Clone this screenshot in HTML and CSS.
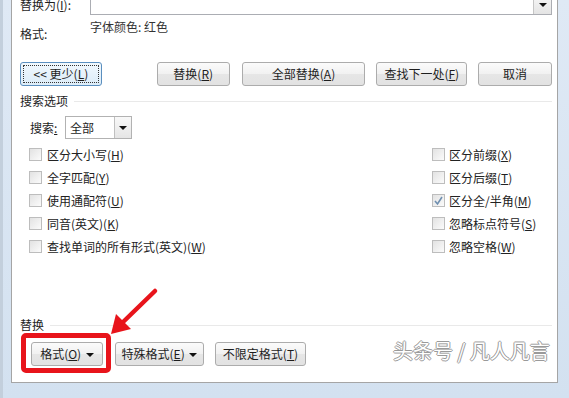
FILE: index.html
```html
<!DOCTYPE html>
<html>
<head>
<meta charset="utf-8">
<link rel="stylesheet" href="styles.css">
</head>
<body>
<div class="frame">
  <div class="dialog">
    <div class="row-replace">
      <span class="lbl">替换为(<u>I</u>):</span>
      <div class="combo">
        <span class="combo-text"></span>
        <span class="combo-btn"><span class="tri"></span></span>
      </div>
    </div>
    <div class="row-format">
      <span class="lbl fmt-lbl">格式:</span>
      <span class="fmt-val">字体颜色: 红色</span>
    </div>
    <div class="btn-row">
      <button class="btn focus"><span class="focus-ring">&lt;&lt; 更少(<u>L</u>)</span></button>
      <button class="btn b-replace">替换(<u>R</u>)</button>
      <button class="btn b-all">全部替换(<u>A</u>)</button>
      <button class="btn b-next">查找下一处(<u>F</u>)</button>
      <button class="btn b-cancel">取消</button>
    </div>
    <div class="group-head"><span>搜索选项</span><span class="rule"></span></div>
    <div class="search-row">
      <span class="search-lbl">搜索<u>:</u></span>
      <div class="select">
        <span class="select-text">全部</span>
        <span class="select-btn"><span class="tri"></span></span>
      </div>
    </div>
    <div class="opts">
      <div class="col col-left">
        <label class="chk"><span class="box"></span>区分大小写(<u>H</u>)</label>
        <label class="chk"><span class="box"></span>全字匹配(<u>Y</u>)</label>
        <label class="chk"><span class="box"></span>使用通配符(<u>U</u>)</label>
        <label class="chk"><span class="box"></span>同音(英文)(<u>K</u>)</label>
        <label class="chk"><span class="box"></span>查找单词的所有形式(英文)(<u>W</u>)</label>
      </div>
      <div class="col col-right">
        <label class="chk"><span class="box"></span>区分前缀(<u>X</u>)</label>
        <label class="chk"><span class="box"></span>区分后缀(<u>T</u>)</label>
        <label class="chk"><span class="box checked"><svg width="11" height="11" viewBox="0 0 11 11"><polyline points="2,6 4.5,9 9,2" fill="none" stroke="#6f8fb0" stroke-width="1.6"/></svg></span>区分全/半角(<u>M</u>)</label>
        <label class="chk"><span class="box"></span>忽略标点符号(<u>S</u>)</label>
        <label class="chk"><span class="box"></span>忽略空格(<u>W</u>)</label>
      </div>
    </div>
    <div class="group-head group-replace"><span>替换</span><span class="rule"></span></div>
    <div class="btn-row2">
      <button class="btn b-format">格式(<u>O</u>) <span class="tri"></span></button>
      <button class="btn b-special">特殊格式(<u>E</u>) <span class="tri"></span></button>
      <button class="btn b-nolimit">不限定格式(<u>T</u>)</button>
    </div>
  </div>
  <div class="highlight"></div>
  <svg class="arrow" width="80" height="70" viewBox="100 280 80 70">
    <line x1="155" y1="291" x2="121" y2="324" stroke="#e8141b" stroke-width="4.5" stroke-linecap="round"/>
    <polygon points="111,334 116,314 131,329" fill="#e8141b"/>
  </svg>
  <div class="watermark">头条号 / 凡人凡言</div>
</div>
</body>
</html>
```
FILE: styles.css
```css
* { box-sizing: border-box; }
html, body { margin: 0; padding: 0; }
body {
  width: 569px;
  height: 398px;
  overflow: hidden;
  font-family: "Noto Sans CJK SC", "Noto Sans", sans-serif;
  font-size: 12px;
  color: #1e1e1e;
}
u { text-decoration: underline; text-underline-offset: 1px; }

.frame {
  position: relative;
  width: 569px;
  height: 398px;
  padding: 0 11px 9px 11px;
  background: linear-gradient(#dfe9f5, #d3e1f0);
  border-left: 3px solid #c3cfdc;
  padding-left: 8px;
  overflow: hidden;
}

.dialog {
  width: 547px;
  height: 389px;
  background: #fff;
  border: 1px solid #a5a5a5;
  border-top: 0;
  padding: 0 5px 0 8px;
  line-height: 14px;
}

.lbl { white-space: nowrap; }

.row-replace {
  display: grid;
  grid-template-columns: 70px 1fr;
  align-items: center;
  margin-top: -6px;
  height: 21px;
}
.combo {
  display: flex;
  height: 21px;
  border: 1px solid #abadb3;
  background: #fff;
}
.combo-text { flex: 1; }
.combo-btn {
  width: 18px;
  border-left: 1px solid #c5c5c5;
  background: linear-gradient(#f7f7f7, #e4e4e4);
  display: flex;
  align-items: center;
  justify-content: center;
}

.tri {
  display: inline-block;
  width: 0;
  height: 0;
  border-left: 4px solid transparent;
  border-right: 4px solid transparent;
  border-top: 4px solid #111;
  vertical-align: middle;
}

.row-format {
  display: grid;
  grid-template-columns: 70px 1fr;
  height: 47px;
}
.fmt-lbl { padding-top: 12px; }
.fmt-val { padding-top: 5px; color: #333; }

.btn {
  font-family: inherit;
  font-size: 12px;
  color: #1e1e1e;
  height: 24px;
  padding: 0;
  border: 1px solid #acacac;
  border-radius: 3px;
  background: linear-gradient(#fbfbfb 0%, #f1f1f1 50%, #e6e6e6 52%, #e2e2e2 100%);
  line-height: 14px;
}

.btn-row {
  display: flex;
  height: 24px;
}
.btn.focus {
  width: 82px;
  border-color: #5b8fbf;
  background: linear-gradient(#f1f8fd, #dcecf8);
  padding: 2px;
}
.focus-ring {
  display: flex;
  align-items: center;
  justify-content: center;
  height: 100%;
  border: 1px dotted #333;
  border-radius: 1px;
}
.b-replace { width: 73px; margin-left: 55px; }
.b-all { width: 124px; margin-left: 12px; }
.b-next { width: 91px; margin-left: 11px; }
.b-cancel { width: 74px; margin-left: 11px; }

.group-head {
  display: flex;
  align-items: center;
  margin-top: 8px;
  height: 14px;
}
.group-head .rule {
  flex: 1;
  height: 1px;
  background: #e9e9e9;
  margin-left: 6px;
}

.search-row {
  display: flex;
  align-items: center;
  margin-top: 8px;
  height: 23px;
  padding-left: 10px;
}
.search-lbl { width: 35px; }
.select {
  display: flex;
  width: 67px;
  height: 23px;
  border: 1px solid #b2b2b2;
  background: #fff;
}
.select-text {
  flex: 1;
  padding-left: 4px;
  line-height: 21px;
}
.select-btn {
  width: 17px;
  border-left: 1px solid #c0c0c0;
  background: linear-gradient(#f8f8f8, #e5e5e5);
  display: flex;
  align-items: center;
  justify-content: center;
}

.opts {
  display: flex;
  justify-content: space-between;
  margin-top: 4px;
}
.col { display: flex; flex-direction: column; }
.col-left { padding-left: 9px; }
.col-right { width: 120px; }
.chk {
  display: flex;
  align-items: center;
  height: 23px;
  color: #222;
  white-space: nowrap;
}
.box {
  width: 13px;
  height: 13px;
  border: 1px solid #bdbdbd;
  background: linear-gradient(135deg, #e2e2e2, #fbfbfb);
  margin-right: 5px;
  display: flex;
  align-items: center;
  justify-content: center;
}
.col-right .box { margin-right: 4px; }

.group-replace { margin-top: 60px; }

.btn-row2 {
  display: flex;
  margin-top: 10px;
  padding-left: 11px;
  height: 24px;
}
.b-format { width: 72px; }
.b-special { width: 89px; margin-left: 12px; }
.b-nolimit { width: 91px; margin-left: 11px; }
.btn-row2 .tri { margin-left: 2px; margin-top: -1px; }

.highlight {
  position: absolute;
  left: 18px;
  top: 333px;
  width: 90px;
  height: 40px;
  border: 5px solid #e8141b;
  border-radius: 5px;
}
.arrow {
  position: absolute;
  left: 97px;
  top: 280px;
}
.watermark {
  position: absolute;
  left: 390px;
  top: 338px;
  font-size: 20px;
  line-height: 26px;
  color: #fff;
  letter-spacing: 0px;
  text-shadow: 1px 0 0 #9a9a9a, -1px 0 0 #9a9a9a, 0 1px 0 #9a9a9a, 0 -1px 0 #9a9a9a;
  white-space: nowrap;
}
```
